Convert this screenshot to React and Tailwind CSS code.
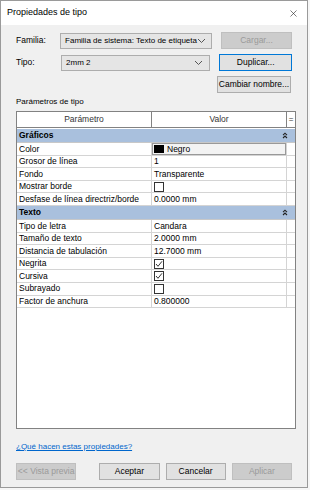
import { X } from 'lucide-react';

const font = { fontFamily: "'Liberation Sans', Arial, sans-serif" };

function Chevron() {
  return (
    <svg width="9" height="6" viewBox="0 0 9 6" className="shrink-0">
      <path d="M1 1 L4.5 4.5 L8 1" fill="none" stroke="#555" strokeWidth="1" />
    </svg>
  );
}

function Collapse() {
  return (
    <svg width="6" height="7" viewBox="0 0 6 7" className="shrink-0">
      <path d="M1 3.2 L3 1.2 L5 3.2 M1 6 L3 4 L5 6" fill="none" stroke="#222" strokeWidth="1.1" />
    </svg>
  );
}

function Select({ value }) {
  return (
    <div className="w-[152px] h-[16px] border border-[#adadad] bg-[#e5e5e5] flex items-center justify-between pl-[4px] pr-[6px] text-[8px] text-black whitespace-nowrap">
      <span>{value}</span>
      <Chevron />
    </div>
  );
}

function Btn({ children, disabled, primary, className = '' }) {
  return (
    <div
      className={
        'h-[17px] flex items-center justify-center text-[8.5px] border whitespace-nowrap ' +
        (disabled
          ? 'bg-[#cccccc] border-[#bfbfbf] text-[#9a9a9a] '
          : primary
          ? 'bg-[#e1e1e1] border-[#0078d7] text-black '
          : 'bg-[#e1e1e1] border-[#adadad] text-black ') +
        className
      }
    >
      {children}
    </div>
  );
}

function Check({ on }) {
  return (
    <div className="w-[10px] h-[10px] border border-[#333] bg-white flex items-center justify-center">
      {on && (
        <svg width="8" height="8" viewBox="0 0 8 8">
          <path d="M1 4 L3 6.3 L7 1.3" fill="none" stroke="#333" strokeWidth="1" />
        </svg>
      )}
    </div>
  );
}

function Group({ label }) {
  return (
    <div className="h-[14px] bg-[#a9c0dd] flex items-center justify-between pl-[2px] pr-[7px] border-b border-[#c8c8c8]">
      <span className="text-[8.5px] font-bold text-black">{label}</span>
      <Collapse />
    </div>
  );
}

function Row({ name, children }) {
  return (
    <div className="h-[12.6px] flex border-b border-[#d4d4d4] text-[8.5px] text-black leading-none whitespace-nowrap">
      <div className="w-[135px] border-r border-[#d4d4d4] flex items-center pl-[2px]">{name}</div>
      <div className="w-[135px] border-r border-[#d4d4d4] flex items-center pl-[2px]">{children}</div>
      <div className="flex-1" />
    </div>
  );
}

export default function App() {
  return (
    <div className="w-[310px] h-[490px] bg-[#f6f6f6]" style={font}>
      <div className="w-[308px] h-[488px] border border-[#9a9a9a] bg-[#f0f0f0] flex flex-col">
        <div className="h-[24px] bg-white flex items-center justify-between pl-[6px] pr-[8px]">
          <span className="text-[9px] text-black">Propiedades de tipo</span>
          <X size={11} strokeWidth={1.3} color="#222" />
        </div>

        <div className="flex-1 flex flex-col px-[15px] pt-[7px]">
          <div className="flex items-center h-[17px]">
            <span className="w-[46px] text-[8.5px] text-black">Familia:</span>
            <Select value="Familia de sistema: Texto de etiqueta" />
            <Btn disabled className="ml-[9px] w-[74px]">Cargar...</Btn>
          </div>
          <div className="flex items-center h-[17px] mt-[5px]">
            <span className="w-[46px] text-[8.5px] text-black">Tipo:</span>
            <Select value="2mm 2" />
            <Btn primary className="ml-[9px] w-[74px]">Duplicar...</Btn>
          </div>
          <div className="flex justify-end mt-[5px] pr-[1px]">
            <Btn className="w-[74px]">Cambiar nombre...</Btn>
          </div>

          <div className="text-[8px] text-black mt-[5px] leading-none">Parámetros de tipo</div>

          <div className="mt-[5px] w-[280px] h-[318px] border border-[#828282] bg-white flex flex-col">
            <div className="h-[16px] flex text-[8.5px] text-[#333] border-b border-[#828282] bg-white">
              <div className="w-[135px] border-r border-[#828282] flex items-center justify-center">Parámetro</div>
              <div className="w-[135px] border-r border-[#828282] flex items-center justify-center">Valor</div>
              <div className="flex-1 flex items-center justify-center text-[8px]">=</div>
            </div>
            <div className="h-[1px]" />
            <Group label="Gráficos" />
            <Row name="Color">
              <div className="w-[134px] h-[12px] border border-[#999] bg-[#f3f3f3] flex items-center gap-[3px] pl-[1px] -ml-[2px]">
                <div className="w-[10px] h-[8px] bg-black" />
                <span>Negro</span>
              </div>
            </Row>
            <Row name="Grosor de línea">1</Row>
            <Row name="Fondo">Transparente</Row>
            <Row name="Mostrar borde"><Check /></Row>
            <Row name="Desfase de línea directriz/borde">0.0000 mm</Row>
            <Group label="Texto" />
            <Row name="Tipo de letra">Candara</Row>
            <Row name="Tamaño de texto">2.0000 mm</Row>
            <Row name="Distancia de tabulación">12.7000 mm</Row>
            <Row name="Negrita"><Check on /></Row>
            <Row name="Cursiva"><Check on /></Row>
            <Row name="Subrayado"><Check /></Row>
            <Row name="Factor de anchura">0.800000</Row>
          </div>

          <div className="mt-[14px] text-[8px] text-[#0066cc] underline leading-none">
            ¿Qué hacen estas propiedades?
          </div>

          <div className="flex items-center mt-[12px]">
            <Btn disabled className="w-[62px]">&lt;&lt; Vista previa</Btn>
            <Btn className="w-[62px] ml-[23px]">Aceptar</Btn>
            <Btn className="w-[62px] ml-[6px]">Cancelar</Btn>
            <Btn disabled className="w-[62px] ml-[6px]">Aplicar</Btn>
          </div>
        </div>
      </div>
    </div>
  );
}
